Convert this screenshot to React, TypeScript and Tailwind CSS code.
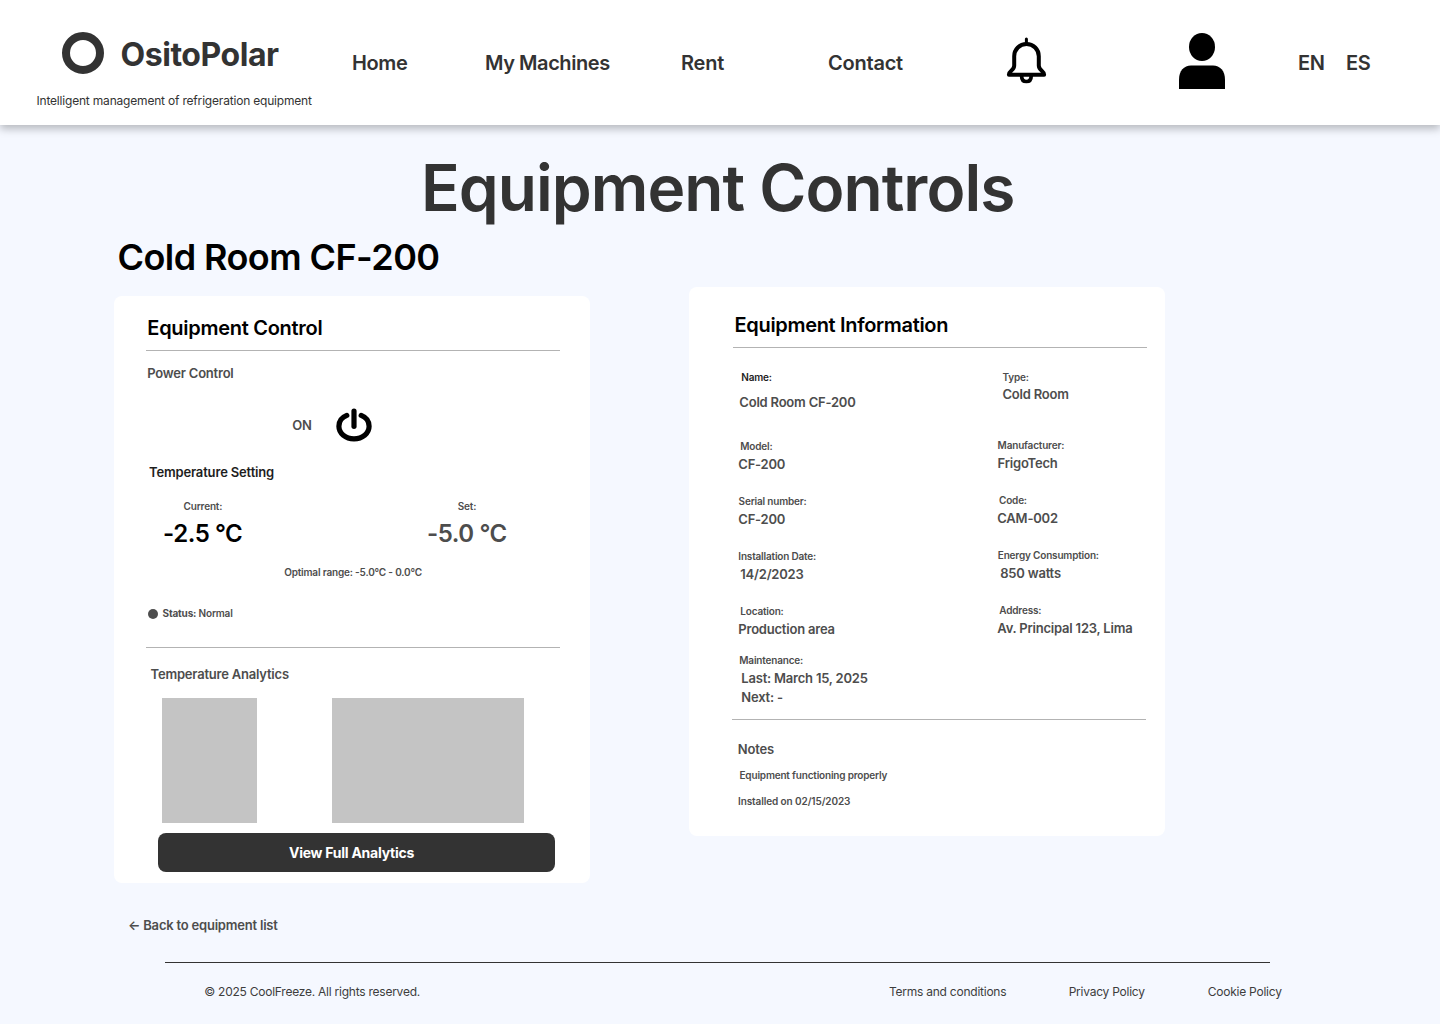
import type { ReactNode } from "react";

function BellIcon() {
  return (
    <svg width="41" height="49" viewBox="0 0 41 49" fill="none" stroke="#000" strokeWidth="4" strokeLinecap="round" strokeLinejoin="round">
      <path d="M20.4 3v4" strokeWidth="3" />
      <path d="M8.200 20.2A12.3 12.3 0 0 1 20.5 7.9 12.3 12.3 0 0 1 32.800 20.2V29.500C32.800 34.600 37.900 34.200 38.100 38.700H2.900C3.100 34.200 8.200 34.600 8.200 29.500Z" />
      <path d="M15.600 40C15.600 43.800 17.700 45.500 20.400 45.500S25.200 43.800 25.200 40" strokeWidth="3.700" />
    </svg>
  );
}

function UserIcon() {
  return (
    <svg width="46" height="56" viewBox="0 0 46 56" fill="#000">
      <ellipse cx="23" cy="14" rx="13" ry="14" />
      <path d="M0 56V46.500C0 38 5 32.500 12 32.500H34C41 32.500 46 38 46 46.500V56Z" />
    </svg>
  );
}

function PowerIcon() {
  return (
    <svg width="36" height="34" viewBox="0 0 36 34" fill="none" stroke="#000" strokeWidth="5.200" strokeLinecap="round">
      <path d="M18 3V18.300" />
      <path d="M10.800 7.400C6 9.300 2.900 13.500 2.900 18.300C2.900 25.400 9.600 30.900 18 30.900S33.100 25.400 33.100 18.300C33.100 13.500 30 9.300 25.200 7.400" />
    </svg>
  );
}

const label = "text-[10px] leading-[12px] tracking-[-0.018em]";
const value = "text-[13px] leading-[16px] tracking-[-0.016em]";

function Field({ name, className, nameClass = "", valueClass = "", children }: {
  name: string;
  className?: string;
  nameClass?: string;
  valueClass?: string;
  children: ReactNode;
}) {
  return (
    <div className={className}>
      <p className={`${label} ${nameClass}`}>{name}</p>
      <p className={`${value} ${valueClass}`}>{children}</p>
    </div>
  );
}

function Header() {
  return (
    <header className="flex h-[125px] items-start bg-white text-[#333] shadow-[0_4px_8px_rgba(0,0,0,0.25)]">
      <div className="w-[352px] shrink-0 pt-8">
        <div className="flex h-[42px] pl-[62px]">
          <div className="size-[42px] rounded-full border-8 border-[#333]" />
          <span className="mt-[3px] ml-[16.500px] text-[32px] leading-[39px] font-bold tracking-[-0.014em]">OsitoPolar</span>
        </div>
        <p className="mt-[19px] pl-[36.500px] text-[12px] leading-[15px] tracking-[-0.016em]">
          Intelligent management of refrigeration equipment
        </p>
      </div>
      <nav className="flex shrink-0 pt-[51px] text-[20px] leading-[24px] font-semibold tracking-[-0.018em]">
        <a className="w-[133px]">Home</a>
        <a className="w-[196px] tracking-[-0.022em]">My Machines</a>
        <a className="w-[147px] tracking-[-0.010em]">Rent</a>
        <a className="w-[178px] tracking-[-0.011em]">Contact</a>
      </nav>
      <div className="w-[173px] shrink-0 pt-9">
        <BellIcon />
      </div>
      <div className="w-[119px] shrink-0 pt-[33px]">
        <UserIcon />
      </div>
      <div className="flex gap-[21.500px] pt-[51px] text-[20px] leading-[24px] font-semibold tracking-[-0.018em]">
        <span>EN</span>
        <span>ES</span>
      </div>
    </header>
  );
}

function ControlCard() {
  return (
    <section className="mt-[9px] h-[587px] w-[476px] rounded-lg bg-white px-8 pt-5">
      <h3 className="pl-[1.300px] text-[20px] leading-[24px] tracking-[-0.014em] text-black">Equipment Control</h3>
      <hr className="mt-[10px] w-[414px] border-[#b3b3b3]" />
      <p className={`${value} mt-[14px] pl-[1.200px]`}>Power Control</p>
      <div className="mt-[27px] flex h-[34px] items-center pl-[146px]">
        <span className={`${value} w-11 pl-[0.300px]`}>ON</span>
        <PowerIcon />
      </div>
      <p className="mt-[22px] pl-[3px] text-[13px] leading-[16px] tracking-[-0.012em] text-[#1e1e1e]">Temperature Setting</p>
      <div className="mt-5 flex pl-[17px]">
        <div className="w-[264px]">
          <p className={`${label} pl-[20.600px]`}>Current:</p>
          <p className="mt-[7px] text-[24px] leading-[29px] tracking-[-0.018em] text-black">-2.5 °C</p>
        </div>
        <div>
          <p className={`${label} pl-[30.800px]`}>Set:</p>
          <p className="mt-[7px] text-[24px] leading-[29px] tracking-[-0.018em]">-5.0 °C</p>
        </div>
      </div>
      <p className={`${label} mt-[18px] pl-[138.200px]`}>Optimal range: -5.0°C - 0.0°C</p>
      <div className="mt-[29px] flex items-end gap-[4.600px] pl-[2px]">
        <span className="size-[10px] rounded-full bg-[#4d4d4d]" />
        <p className={label}>
          <span className="font-bold">Status:</span> Normal
        </p>
      </div>
      <hr className="mt-7 w-[414px] border-[#b3b3b3]" />
      <p className={`${value} mt-[18px] pl-[4.600px]`}>Temperature Analytics</p>
      <div className="mt-4 flex gap-[75px] pl-4">
        <div className="h-[125px] w-[95px] bg-[#c4c4c4]" />
        <div className="h-[125px] w-[192px] bg-[#c4c4c4]" />
      </div>
      <button className="mt-[10px] ml-3 flex h-[39px] w-[397px] items-center justify-center rounded-lg bg-[#333] pr-[10px] text-[14px] leading-[17px] font-bold tracking-[-0.018em] text-white">
        View Full Analytics
      </button>
    </section>
  );
}

function InformationCard() {
  return (
    <section className="h-[549px] w-[476px] rounded-lg bg-white pt-[26px] pl-[43px]">
      <h3 className="pl-[2.500px] text-[20px] leading-[24px] tracking-[-0.016em] text-black">Equipment Information</h3>
      <hr className="mt-[10px] ml-px w-[414px] border-[#b3b3b3]" />
      <div className="mt-[23px] flex pl-[6.300px]">
        <div className="w-[259px]">
          <Field name="Name:" nameClass="pl-[3px] text-[#1e1e1e]" valueClass="mt-[11px] pl-px">Cold Room CF-200</Field>
          <Field name="Model:" className="mt-[30px]" nameClass="pl-[2px]" valueClass="mt-1">CF-200</Field>
          <Field name="Serial number:" className="mt-[23px]" nameClass="pl-[0.300px]" valueClass="mt-1">CF-200</Field>
          <Field name="Installation Date:" className="mt-[23px]" valueClass="mt-1 pl-[2px]">14/2/2023</Field>
          <Field name="Location:" className="mt-[23px]" nameClass="pl-[2px]" valueClass="mt-1">Production area</Field>
          <Field name="Maintenance:" className="mt-[17px]" nameClass="pl-px" valueClass="mt-1 pl-[3px]">Last: March 15, 2025</Field>
          <p className={`${value} mt-[3px] pl-[3px]`}>Next: -</p>
        </div>
        <div>
          <Field name="Type:" nameClass="pl-[5.200px]" valueClass="mt-[3px] pl-[5.200px]">Cold Room</Field>
          <Field name="Manufacturer:" className="mt-[37px]" nameClass="pl-[0.300px]" valueClass="mt-1 pl-[0.300px]">FrigoTech</Field>
          <Field name="Code:" className="mt-[23px]" nameClass="pl-[1.700px]" valueClass="mt-1">CAM-002</Field>
          <Field name="Energy Consumption:" className="mt-[23px]" nameClass="pl-[0.500px]" valueClass="mt-1 pl-[2.900px]">850 watts</Field>
          <Field name="Address:" className="mt-[23px]" nameClass="pl-[2px]" valueClass="mt-1">Av. Principal 123, Lima</Field>
        </div>
      </div>
      <hr className="mt-[14px] w-[414px] border-[#b3b3b3]" />
      <p className={`${value} mt-[21px] pl-[5.800px]`}>Notes</p>
      <p className={`${label} mt-3 pl-[7.500px]`}>Equipment functioning properly</p>
      <p className="mt-[14px] pl-[6px] text-[10px] leading-[12px] tracking-[-0.010em]">Installed on 02/15/2023</p>
    </section>
  );
}

export default function App() {
  return (
    <div className="h-[1024px] w-[1440px] overflow-hidden bg-[#f5f8ff] font-['Inter',sans-serif] whitespace-nowrap">
      <Header />
      <main className="font-semibold text-[#4d4d4d]">
        <h1 className="mt-6 pl-[421px] text-[64px] leading-[77px] tracking-[-0.015em] text-[#333]">Equipment Controls</h1>
        <h2 className="mt-[9px] pl-[117.500px] text-[36px] leading-[44px] tracking-[-0.016em] text-black">Cold Room CF-200</h2>
        <div className="mt-2 flex items-start gap-[99px] pl-[114px]">
          <ControlCard />
          <InformationCard />
        </div>
        <a className={`${value} mt-[34px] block pl-[128px]`}>← Back to equipment list</a>
      </main>
      <footer className="mt-[29px] text-[12px] leading-[15px] tracking-[-0.020em] text-[#3d3d3d]">
        <hr className="ml-[165px] w-[1105px] border-[#333]" />
        <div className="mt-[21px] flex pl-[204.200px]">
          <span className="w-[684.800px]">© 2025 CoolFreeze. All rights reserved.</span>
          <a className="w-[179.700px]">Terms and conditions</a>
          <a className="w-[139.100px]">Privacy Policy</a>
          <a>Cookie Policy</a>
        </div>
      </footer>
    </div>
  );
}
